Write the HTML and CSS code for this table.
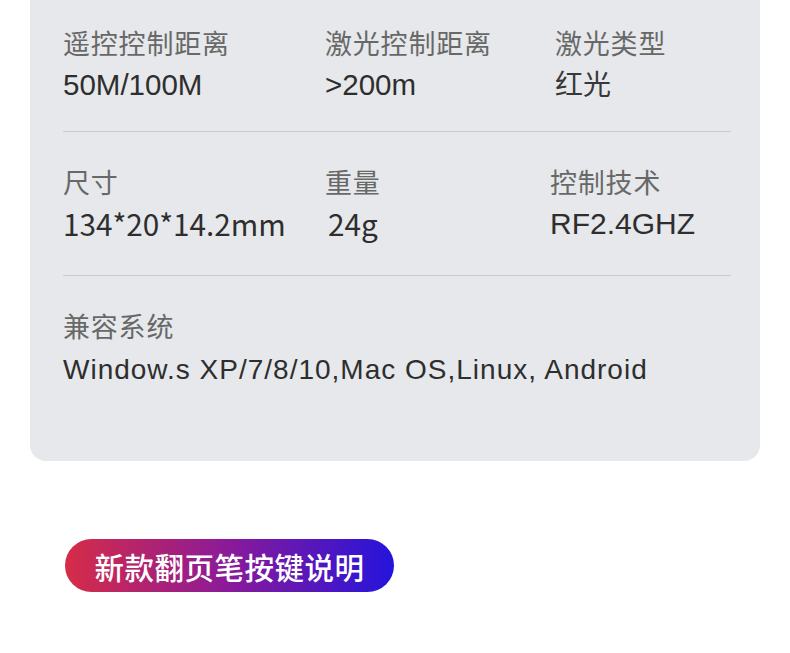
FILE: index.html
```html
<!DOCTYPE html>
<html lang="zh-CN">
<head>
<meta charset="utf-8">
<title>参数</title>
<link rel="stylesheet" href="styles.css">
</head>
<body>
<section class="spec-card">
  <div class="spec-row row-a">
    <div class="spec"><div class="label">遥控控制距离</div><div class="value">50M/100M</div></div>
    <div class="spec"><div class="label">激光控制距离</div><div class="value">&gt;200m</div></div>
    <div class="spec"><div class="label">激光类型</div><div class="value cjk">红光</div></div>
  </div>
  <div class="spec-row row-b">
    <div class="spec"><div class="label">尺寸</div><div class="value">134*20*14.2mm</div></div>
    <div class="spec"><div class="label">重量</div><div class="value shift">24g</div></div>
    <div class="spec"><div class="label">控制技术</div><div class="value alt">RF2.4GHZ</div></div>
  </div>
  <div class="spec-row row-c">
    <div class="spec"><div class="label">兼容系统</div><div class="value wide">Window.s XP/7/8/10,Mac OS,Linux, Android</div></div>
  </div>
</section>
<div class="actions">
  <span class="pill">新款翻页笔按键说明</span>
</div>
</body>
</html>
```
FILE: styles.css
```css
html, body {
  margin: 0;
  padding: 0;
  background: #ffffff;
}
body {
  width: 790px;
  height: 653px;
  overflow: hidden;
  font-family: "Liberation Sans", "Noto Sans CJK SC", sans-serif;
}
.spec-card {
  margin: 0 30px;
  padding: 0 29px 70px 33px;
  background: #e6e8eb;
  border-radius: 0 0 16px 16px;
}
.spec-row {
  display: grid;
  padding: 29px 0 24px;
  border-bottom: 1px solid #c8cacd;
}
.spec-row.row-a {
  padding-top: 22px;
  padding-bottom: 25px;
  grid-template-columns: 262px 230px 1fr;
}
.spec-row.row-b {
  padding-bottom: 30px;
  grid-template-columns: 262px 225px 1fr;
}
.spec-row.row-c {
  border-bottom: none;
  padding-bottom: 0;
}
.label {
  font-family: "Noto Sans CJK SC", sans-serif;
  font-size: 27px;
  line-height: 42px;
  color: #686868;
  letter-spacing: 0.8px;
}
.value {
  font-family: "Liberation Sans", "Noto Sans CJK SC", sans-serif;
  font-size: 29.5px;
  line-height: 42px;
  color: #2e2e2e;
}
.value.cjk {
  font-family: "Noto Sans CJK SC", sans-serif;
  font-weight: 400;
  font-size: 28px;
  color: #383838;
  margin-top: -2px;
}
.row-b .value {
  font-family: "Noto Sans CJK SC", sans-serif;
  font-size: 29.7px;
}
.row-b .value.alt {
  font-family: "Liberation Sans", sans-serif;
  font-size: 30px;
}
.value.shift {
  padding-left: 3px;
}
.value.wide {
  font-size: 28px;
  letter-spacing: 1px;
  margin-top: 2px;
}
.actions {
  padding: 78px 0 0 65px;
}
.pill {
  display: inline-flex;
  align-items: center;
  justify-content: center;
  width: 329px;
  height: 53px;
  border-radius: 27px;
  background: linear-gradient(90deg, #d62c47 0%, #8a1a9a 50%, #2414dc 100%);
  color: #ffffff;
  font-family: "Noto Sans CJK SC", sans-serif;
  font-weight: 500;
  font-size: 29.5px;
  letter-spacing: 0.5px;
}
```
